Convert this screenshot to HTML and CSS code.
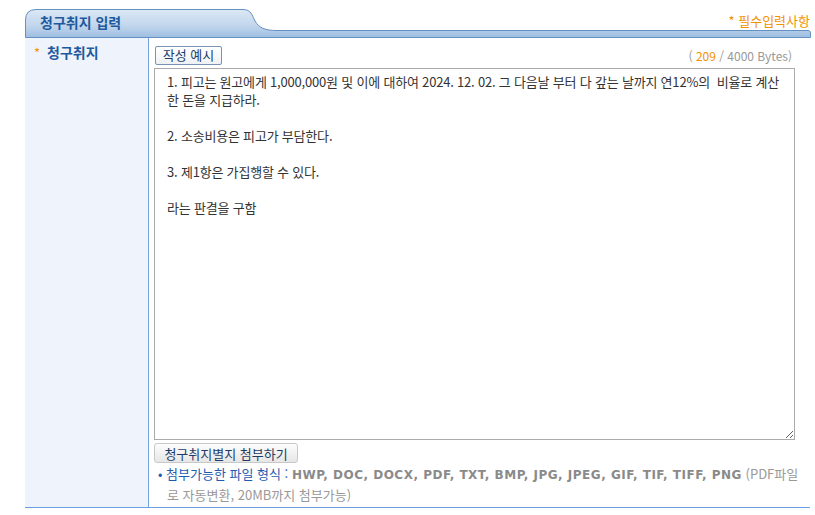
FILE: index.html
```html
<!DOCTYPE html>
<html lang="ko">
<head>
<meta charset="utf-8">
<link rel="stylesheet" href="styles.css">
</head>
<body>
<div class="wrap">
  <div class="header">
    <svg class="tab-bg" width="786" height="29" viewBox="0 0 786 29">
      <defs>
        <linearGradient id="g" x1="0" y1="0" x2="0" y2="1">
          <stop offset="0" stop-color="#dce8f5"/>
          <stop offset="0.6" stop-color="#c0d5ec"/>
          <stop offset="1" stop-color="#9dbde0"/>
        </linearGradient>
      </defs>
      <path d="M0.5,28.5 V11 Q0.5,0.5 11,0.5 H218 C226,0.5 227,6 230,12 C234,19 240,21.5 252,21.5 H783 Q785.5,21.5 785.5,24 V28.5 Z" fill="url(#g)" stroke="#6590c2" stroke-width="1"/>
    </svg>
    <div class="header-content">
      <h2 class="title">청구취지 입력</h2>
      <span class="required"><span class="star">*</span> 필수입력사항</span>
    </div>
  </div>
  <div class="row">
    <div class="label"><span class="star">*</span> 청구취지</div>
    <div class="field">
      <div class="field-top">
        <button class="btn-sample">작성 예시</button>
        <span class="counter">( <em>209</em> / 4000 Bytes)</span>
      </div>
      <textarea class="content">1. 피고는 원고에게 1,000,000원 및 이에 대하여 2024. 12. 02. 그 다음날 부터 다 갚는 날까지 연12%의  비율로 계산한 돈을 지급하라.

2. 소송비용은 피고가 부담한다.

3. 제1항은 가집행할 수 있다.

라는 판결을 구함</textarea>
      <button class="btn-attach">청구취지별지 첨부하기</button>
      <p class="info"><span class="bullet">•</span> <span class="lead">첨부가능한 파일 형식 :</span> <b>HWP, DOC, DOCX, PDF, TXT, BMP, JPG, JPEG, GIF, TIF, TIFF, PNG</b> <span class="note">(PDF파일</span><span class="note">로 자동변환, 20MB까지 첨부가능)</span></p>
    </div>
  </div>
</div>
</body>
</html>
```
FILE: styles.css
```css
* { box-sizing: border-box; }
html, body { margin: 0; padding: 0; background: #fff; }
body {
  font-family: "Noto Sans CJK KR", "Noto Sans", sans-serif;
  font-size: 13px;
  color: #333;
}
.wrap {
  margin-left: 25px;
  width: 786px;
  padding-top: 9px;
}
.header {
  display: grid;
  height: 29px;
}
.tab-bg, .header-content { grid-area: 1 / 1; }
.header-content {
  display: flex;
  justify-content: space-between;
  align-items: flex-start;
}
.title {
  margin: 0;
  padding: 4px 0 0 15px;
  font-size: 14px;
  line-height: 18px;
  font-weight: bold;
  color: #1f5a9e;
}
.required {
  padding-top: 3px;
  margin-right: 1px;
  color: #f39200;
  font-size: 13px;
  line-height: 18px;
}
.star { color: #f39200; }
.row {
  display: flex;
  width: 785px;
  border-bottom: 1px solid #6c9ee3;
}
.label {
  width: 124px;
  flex: none;
  background: #eef3fc;
  border-right: 1px solid #76a4e2;
  padding: 5px 0 0 9px;
  font-weight: bold;
  color: #1f5a9e;
  font-size: 14px;
  line-height: 18px;
}
.label .star { font-weight: normal; font-size: 13px; margin-right: 3px; }
.field {
  flex: 1;
  padding: 7px 0 3px 5px;
}
.field-top {
  display: flex;
  justify-content: space-between;
  align-items: center;
  width: 638px;
  height: 20px;
  margin-bottom: 3px;
}
.btn-sample {
  margin-left: 1px;
  height: 19px;
  width: 67px;
  padding: 0;
  border: 1px solid #7893b6;
  border-radius: 2px;
  background: linear-gradient(#ffffff, #eef1f5);
  color: #1d3b66;
  font-family: inherit;
  font-size: 13px;
  line-height: 16px;
}
.counter {
  color: #999;
  font-size: 12px;
}
.counter em { font-style: normal; color: #f39200; }
.content {
  display: block;
  width: 641px;
  height: 372px;
  border: 1px solid #aaa;
  padding: 4px 12px;
  resize: vertical;
  font-family: "Noto Sans CJK KR", sans-serif;
  font-size: 13px;
  letter-spacing: -0.2px;
  line-height: 18px;
  color: #333;
  margin: 0;
}
.btn-attach {
  display: block;
  margin-top: 3px;
  height: 20px;
  width: 144px;
  padding: 0;
  border: 1px solid #c8c8c8;
  border-radius: 3px;
  background: linear-gradient(#fdfdfd, #e6e6e6);
  color: #1d3b66;
  font-family: inherit;
  font-size: 13px;
  line-height: 17px;
}
.info {
  margin: 1px 8px 0 0;
  padding-left: 13px;
  text-indent: -9px;
  line-height: 19px;
  color: #1d5cb0;
  font-size: 13px;
  word-break: break-all;
}
.bullet { color: #1d5cb0; }
.info b {
  color: #8a8a8a;
  font-weight: bold;
  font-family: "DejaVu Sans", sans-serif;
  font-size: 12px;
  line-height: 19px;
  letter-spacing: 0.5px;
  word-break: normal;
}
.note { color: #999; }
```
